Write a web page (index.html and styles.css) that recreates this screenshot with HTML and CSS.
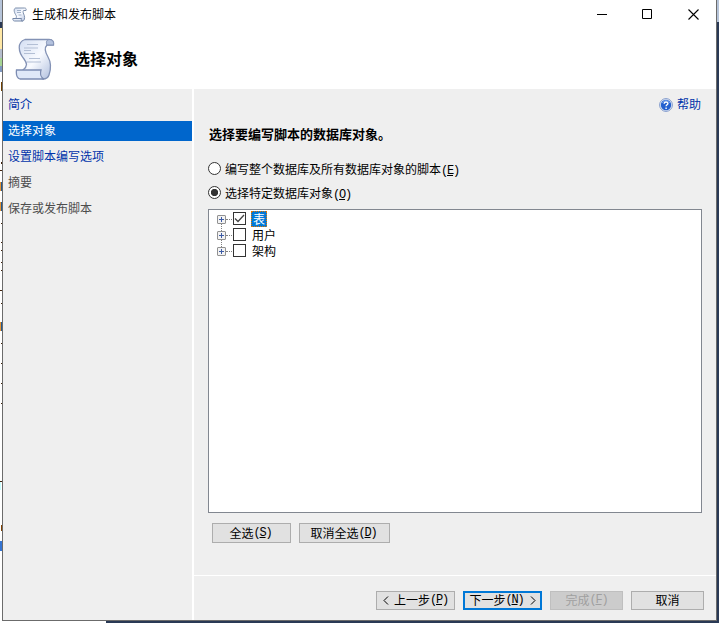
FILE: index.html
```html
<!DOCTYPE html>
<html lang="zh-CN">
<head>
<meta charset="utf-8">
<title>生成和发布脚本</title>
<link rel="stylesheet" href="styles.css">
</head>
<body>
<svg class="defs" width="0" height="0">
  <defs>
    <linearGradient id="paper" x1="0" y1="0" x2="1" y2="1">
      <stop offset="0" stop-color="#d3def2"/><stop offset=".5" stop-color="#f8faff"/><stop offset="1" stop-color="#a9b9da"/>
    </linearGradient>
    <symbol id="scroll" viewBox="0 0 40 42">
      <path d="M10 1.500H34C38 1.500 39 4 38.500 7H32C29 10 30 14 33 19C36 24 36 31 34 37C33 40 31 41 28 41L8 32C13 28 12 25 9 21C3 14 2 4 10 1.500Z" fill="url(#paper)" stroke="#8392b5" stroke-width="1.300"/>
      <path d="M34 1.500C31 2 31 5 32 7H38.500C39 3 37 1.500 34 1.500Z" fill="#b4c2de" stroke="#8392b5"/>
      <path d="M1.500 32H26C25 36 26 40 29 41H5C2 40 1 36 1.500 32Z" fill="#dfe8f8" stroke="#7c8cb2" stroke-width="1.300"/>
      <path d="M12 6.500h11M9 10h14M9 12.500h7M9 15.500h11M14 20.500h11M12 24h14" stroke="#b3bfd5" fill="none"/>
    </symbol>
  </defs>
</svg>
<div class="desktop">
  <div class="behind-left">
    <i class="strip top"></i><i class="strip navy"></i><i class="strip tab"></i><i class="strip bar"></i><i class="strip green"></i><i class="strip line"></i>
    <svg class="code" width="2" height="551" viewBox="0 72 2 551">
      <path d="M1 82h1v9h-1z" fill="#704000"/>
      <path d="M0 182h1v9h-1zM0 202h1v9h-1zM0 322h1v9h-1z" fill="#e79636"/>
      <path d="M1 182h1v9h-1zM1 202h1v9h-1zM1 322h1v9h-1z" fill="#23598f"/>
      <path d="M1 162h1v2h-1zM0 170h2v1h-2zM1 223h1v1h-1zM1 242h1v1h-1zM1 250h1v1h-1zM1 262h1v1h-1zM1 270h1v1h-1zM0 290h2v1h-2zM1 303h1v1h-1zM1 343h1v1h-1zM1 363h1v1h-1zM1 383h1v1h-1zM1 403h1v1h-1zM0 481h2v1h-2z" fill="#40200a"/>
      <path d="M0 482h1v8h-1z" fill="#c8ffff"/><path d="M1 525h1v6h-1z" fill="#804000"/><path d="M0 541h2v10h-2z" fill="#3474d2"/>
    </svg>
  </div>
  <div class="window">
    <header class="titlebar">
      <svg class="app-icon" width="15" height="15" viewBox="0 0 15 15">
        <path d="M3.500 1H12.500C14 1 14.500 2 14 3.500H11.500C10.500 5 11.500 6.500 12.300 8.500C13 11 12.500 14 10.500 14L3.500 11.500C5 10 4.500 9 3.500 7.500C2 5 1.500 2 3.500 1Z" fill="url(#paper)" stroke="#7f91ad"/>
        <path d="M.8 11.500H9.500C9 13 9.500 14 10.500 14H2.500C1.200 13.800.8 13 .8 11.500Z" fill="#e6edf8" stroke="#7587a8"/>
        <path d="M5 3.500h4M5 5.500h4M6.500 8h3" stroke="#9fb0c8"/>
      </svg>
      <span class="caption">生成和发布脚本</span>
      <svg class="controls" width="104" height="12" viewBox="0 0 104 12" fill="none" stroke="#000">
        <path d="M0 6.500h10"/><path d="M45.500 1.500h9v9h-9z"/><path d="M91.500 1.500l10 10M101.500 1.500l-10 10" stroke-width="1.100"/>
      </svg>
    </header>
    <div class="banner">
      <svg class="page-icon" width="40" height="42"><use href="#scroll"/></svg>
      <h1>选择对象</h1>
    </div>
    <div class="body">
      <nav class="steps">
        <a class="step">简介</a>
        <a class="step current">选择对象</a>
        <a class="step">设置脚本编写选项</a>
        <a class="step pending">摘要</a>
        <a class="step pending">保存或发布脚本</a>
      </nav>
      <main class="main">
        <section class="content">
          <div class="help">
            <svg width="14" height="14" viewBox="0 0 14 14"><circle cx="7" cy="7" r="6.400" fill="#e4ebf7" stroke="#8099ca" stroke-width="1"/><circle cx="7" cy="7" r="5.200" fill="#2460cf"/><path d="M3 5a4.500 4.500 0 0 1 8 0" fill="none" stroke="#6c9cec"/><path d="M5.200 5.700C5.200 3.300 9 3.500 8.900 5.500C8.800 6.800 7.100 6.700 7.100 8.300M7.100 9.500v1.400" fill="none" stroke="#fff" stroke-width="1.400"/></svg>
            <span>帮助</span>
          </div>
          <h2>选择要编写脚本的数据库对象。</h2>
          <label class="radio"><i class="dot"></i><span>编写整个数据库及所有数据库对象的脚本<b class="key">(<u>E</u>)</b></span></label>
          <label class="radio"><i class="dot on"></i><span>选择特定数据库对象<b class="key">(<u>O</u>)</b></span></label>
          <div class="tree">
            <div class="node"><i class="plus"></i><i class="link"></i><i class="check"><svg width="11" height="11" viewBox="0 0 11 11"><path d="M1 5.500L4 8.500L10 2" fill="none" stroke="#444" stroke-width="1.300"/></svg></i><span class="label selected">表</span></div>
            <div class="node"><i class="plus"></i><i class="link"></i><i class="check"></i><span class="label">用户</span></div>
            <div class="node"><i class="plus"></i><i class="link"></i><i class="check"></i><span class="label">架构</span></div>
          </div>
          <div class="select-actions">
            <div class="btn all">全选<b class="key">(<u>S</u>)</b></div>
            <div class="btn none">取消全选<b class="key">(<u>D</u>)</b></div>
          </div>
        </section>
        <footer class="footer">
          <div class="btn prev"><svg class="chev" width="6" height="9"><path d="M5 .5L1 4.500L5 8.500"/></svg>上一步<b class="key">(<u>P</u>)</b></div>
          <div class="btn next">下一步<b class="key">(<u>N</u>)</b><svg class="chev" width="6" height="9"><path d="M1 .5L5 4.500L1 8.500"/></svg></div>
          <div class="btn done">完成<b class="key">(<u>F</u>)</b></div>
          <div class="btn cancel">取消</div>
        </footer>
      </main>
    </div>
  </div>
  <div class="behind-right"></div>
  <div class="behind-bottom"></div>
</div>
</body>
</html>
```
FILE: styles.css
```css
* { box-sizing: border-box; }
body {
  margin: 0;
  font: 12px/16px "Noto Sans CJK SC", sans-serif;
  color: #000;
  overflow: hidden;
}
i, b { font-style: normal; font-weight: inherit; }
.defs { position: absolute; }
.desktop {
  display: grid;
  grid-template-columns: 2px 715px 2px;
  grid-template-rows: 621px 2px;
  width: 719px;
  height: 623px;
  background: #fff;
}
.behind-left { grid-row: 1 / 3; display: flex; flex-direction: column; }
.strip { display: block; flex: none; }
.strip.top { height: 22px; background: #b6c4d9; }
.strip.navy { height: 6px; background: #293955; }
.strip.tab { height: 21px; background: #ffe8a6; }
.strip.bar { height: 9px; background: #b5bdcc; }
.strip.green { height: 8px; background: #a6d494; }
.strip.line { height: 6px; background: #7f98c0; }
.code { display: block; flex: none; }
.behind-right { background: linear-gradient(#b6c4d9 22px, #293955 22px); }
.behind-bottom { grid-column: 2 / 4; margin-left: 104px; background: #293955; }

.window {
  display: flex;
  flex-direction: column;
  border: solid #6b6b6b;
  border-width: 0 1px 1px;
  background: #fff;
}
.titlebar { display: flex; align-items: center; height: 28px; padding: 0 15px 0 9px; }
.caption { margin-left: 5px; }
.controls { margin-left: auto; }
.banner { display: flex; align-items: center; height: 61px; padding: 0 0 0 12px; }
.banner h1 { margin: -2px 0 0 19px; font-size: 16px; line-height: 20px; }
.body { display: flex; flex: 1; min-height: 0; }
.steps { width: 189px; padding-top: 6px; background: #efefef; }
.step { display: block; height: 20px; margin-bottom: 6px; padding-left: 5px; line-height: 17px; color: #0033aa; }
.step.current { color: #fff; background: #0066cc; }
.step.pending { color: #4d4d4d; }
.main { display: flex; flex-direction: column; flex: 1; margin-left: 2px; background: #efefef; }
.content { height: 487px; padding: 7px 14px 0; border-bottom: 1px solid #fff; }
.help { display: flex; align-items: center; justify-content: flex-end; gap: 4px; height: 17px; padding-right: 1px; color: #0033aa; }
.help span { margin-top: -2px; }
.help svg { margin-top: 1px; }
h2 { margin: 12px 0 14px 1px; font-size: 13px; line-height: 18px; }
.radio { display: flex; align-items: center; height: 24px; }
.dot { width: 13px; height: 13px; margin: -1px 4px 0 0; border: 1px solid #333; border-radius: 50%; background: #fff; }
.dot.on { background: radial-gradient(circle, #333 3.300px, #fff 4px); }
.key { display: inline-block; font: 12px/14px "Liberation Mono", monospace; letter-spacing: -1.2px; }
.tree { width: 494px; height: 304px; margin-top: 4px; padding: 1px 0 0 8px; border: 1px solid #828790; background: #fff; }
.node { display: flex; align-items: center; height: 16px; }
.plus {
  position: relative;
  width: 9px;
  height: 9px;
  margin-top: 1px;
  border: 1px solid #919191;
  border-radius: 1px;
  background: linear-gradient(#3d5ba5, #3d5ba5) 1px 3px / 5px 1px no-repeat, linear-gradient(#3d5ba5, #3d5ba5) 3px 1px / 1px 5px no-repeat, #f3f3f3;
}
.node + .node .plus::before { content: ""; position: absolute; left: 3px; top: -8px; height: 7px; border-left: 1px dotted #808080; }
.link { width: 6px; margin-right: 1px; border-top: 1px dotted #808080; }
.check { display: flex; width: 13px; height: 13px; margin-top: -1px; border: 1px solid #333; background: #fff; }
.label { height: 16px; margin-left: 5px; padding: 0 2px 0 1px; line-height: 16px; }
.label.selected { padding: 0 1px; line-height: 14px; color: #fff; background: #0078d7; border: 1px dotted #e87800; }
.select-actions { display: flex; gap: 8px; margin: 10px 0 0 4px; }
.btn { display: flex; align-items: center; justify-content: center; height: 20px; border: 1px solid #adadad; background: #e1e1e1; white-space: nowrap; }
.all { width: 79px; }
.none { width: 91px; }
.select-actions .btn { padding-right: 2px; }
.footer { display: flex; justify-content: flex-end; padding: 15px 12px 0 0; }
.footer .btn { height: 19px; padding-bottom: 1px; }
.prev { width: 79px; margin-right: 8px; }
.next { width: 79px; margin-right: 8px; }
.footer .next { border: 2px solid #0078d7; }
.done { width: 73px; margin-right: 8px; }
.footer .done { color: #a0a0a0; background: #ccc; border-color: #bfbfbf; }
.cancel { width: 73px; }
.chev { fill: none; stroke: #000; stroke-width: 1; }
.prev .chev { margin-right: 5px; }
.next .chev { margin-left: 6px; }
```
